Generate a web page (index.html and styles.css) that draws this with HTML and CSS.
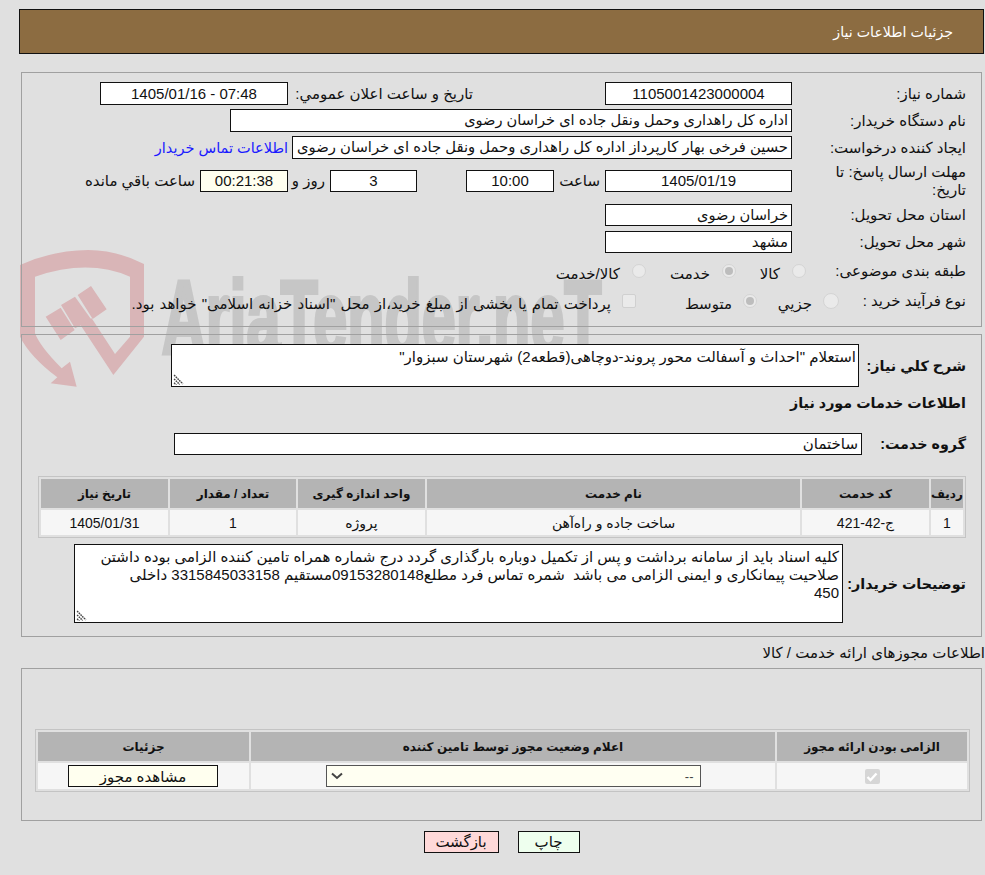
FILE: index.html
```html
<!DOCTYPE html>
<html lang="fa" dir="rtl">
<head>
<meta charset="utf-8">
<title>جزئیات اطلاعات نیاز</title>
<link rel="stylesheet" href="styles.css">
</head>
<body>
<svg class="watermark" width="610" height="160" viewBox="0 0 1830 480" aria-hidden="true">
  <path d="M30 75 Q130 30 235 30 Q320 30 402 72 L402 290 L310 405 L208 250 L245 235 L315 342 L360 290 L360 110 Q235 55 75 110 L75 280 Q90 320 155 385 L180 365 L200 440 L122 430 L142 412 Q60 350 30 290 Z" class="wm-shield"/>
  <path d="M107 230 L152 203 L194 270 L152 300 Z M153 195 L195 170 L245 240 L195 265 Z M203 165 L243 138 L290 208 L248 237 Z" class="wm-shield"/>
  <text x="455" y="338" font-size="310" textLength="1320" lengthAdjust="spacingAndGlyphs" class="wm-text">AriaTender.neT</text>
</svg>

<header class="page-title">جزئیات اطلاعات نیاز</header>

<section class="panel panel-main">
  <div class="row">
    <label class="lbl">شماره نیاز:</label>
    <div class="box w187 center">1105001423000004</div>
    <label class="lbl-mid">تاریخ و ساعت اعلان عمومي:</label>
    <div class="box w188 center" dir="ltr">1405/01/16 - 07:48</div>
  </div>
  <div class="row">
    <label class="lbl">نام دستگاه خریدار:</label>
    <div class="box w562 compact">اداره کل راهداری وحمل ونقل جاده ای خراسان رضوی</div>
  </div>
  <div class="row">
    <label class="lbl">ایجاد کننده درخواست:</label>
    <div class="box w500 wide">حسین فرخی بهار کارپرداز اداره کل راهداری وحمل ونقل جاده ای خراسان رضوی</div>
    <a class="link" href="#">اطلاعات تماس خریدار</a>
  </div>
  <div class="row row-deadline">
    <label class="lbl lbl-wrap">مهلت ارسال پاسخ: تا تاریخ:</label>
    <div class="box w187 center h22">1405/01/19</div>
    <span class="t-saat">ساعت</span>
    <div class="box w88 center h22">10:00</div>
    <div class="box w87 center h22 days">3</div>
    <span class="t-roz">روز و</span>
    <div class="box w88 center h22 remain">00:21:38</div>
    <span class="t-remain">ساعت باقي مانده</span>
  </div>
  <div class="row row-h22">
    <label class="lbl">استان محل تحویل:</label>
    <div class="box w187 h22 compact">خراسان رضوی</div>
  </div>
  <div class="row row-h22">
    <label class="lbl">شهر محل تحویل:</label>
    <div class="box w187 h22">مشهد</div>
  </div>
  <div class="row row-radio">
    <label class="lbl lbl-cat">طبقه بندی موضوعی:</label>
    <span class="radio"></span><span class="ch ch-kala">کالا</span>
    <span class="radio on"></span><span class="ch ch-khed">خدمت</span>
    <span class="radio"></span><span class="ch">کالا/خدمت</span>
  </div>
  <div class="row row-radio2">
    <label class="lbl lbl-type">نوع فرآیند خرید :</label>
    <span class="radio big"></span><span class="ch ch-joz">جزیي</span>
    <span class="radio on"></span><span class="ch ch-mot">متوسط</span>
    <span class="check"></span><span class="ch ch-pay">پرداخت تمام یا بخشی از مبلغ خرید،از محل "اسناد خزانه اسلامی" خواهد بود.</span>
  </div>
</section>

<section class="panel panel-need">
  <div class="row-desc">
    <label class="lbl-b">شرح کلي نیاز:</label>
    <div class="area area-desc">استعلام "احداث و آسفالت محور پروند-دوچاهی(قطعه2) شهرستان سبزوار"<svg class="grip" width="11" height="11" viewBox="0 0 10 10"><path d="M1 1 L9 9 M1 4.5 L6 9.5 M1 8 L3 10" stroke="#444" stroke-width="1.3" fill="none" stroke-dasharray="1.5 .7"/></svg></div>
  </div>
  <h2 class="subhead">اطلاعات خدمات مورد نیاز</h2>
  <div class="row-group">
    <label class="lbl-b lbl-group">گروه خدمت:</label>
    <div class="box w688 h22">ساختمان</div>
  </div>
  <table class="grid grid-items">
    <thead>
      <tr><th class="c1">ردیف</th><th class="c2">کد خدمت</th><th class="c3">نام خدمت</th><th class="c4">واحد اندازه گیری</th><th class="c5">تعداد / مقدار</th><th class="c6">تاریخ نیاز</th></tr>
    </thead>
    <tbody>
      <tr><td>1</td><td>ج-42-421</td><td>ساخت جاده و راه‌آهن</td><td>پروژه</td><td>1</td><td>1405/01/31</td></tr>
    </tbody>
  </table>
  <div class="row-notes">
    <label class="lbl-b lbl-notes">توضیحات خریدار:</label>
    <div class="area area-notes">کلیه اسناد باید از سامانه برداشت و پس از تکمیل دوباره بارگذاری گردد درج شماره همراه تامین کننده الزامی بوده داشتن صلاحیت پیمانکاری و ایمنی الزامی می باشد&nbsp; شمره تماس فرد مطلع09153280148مستقیم 3315845033158 داخلی<br>450<svg class="grip" width="11" height="11" viewBox="0 0 10 10"><path d="M1 1 L9 9 M1 4.5 L6 9.5 M1 8 L3 10" stroke="#444" stroke-width="1.3" fill="none" stroke-dasharray="1.5 .7"/></svg></div>
  </div>
</section>

<div class="permit-title">اطلاعات مجوزهای ارائه خدمت / کالا</div>
<section class="panel panel-permit">
  <table class="grid grid-permit">
    <thead>
      <tr><th class="p1">الزامی بودن ارائه مجوز</th><th class="p2">اعلام وضعیت مجوز توسط تامین کننده</th><th class="p3">جزئیات</th></tr>
    </thead>
    <tbody>
      <tr>
        <td><span class="checked"><svg width="12" height="10" viewBox="0 0 12 10"><path d="M1.5 5 L4.5 8 L10.5 1.5" stroke="#fff" stroke-width="2.4" fill="none"/></svg></span></td>
        <td><div class="select"><span>--</span><svg width="12" height="8" viewBox="0 0 12 8"><path d="M1 1.5 L6 6 L11 1.5" stroke="#444" stroke-width="2" fill="none"/></svg></div></td>
        <td><button class="btn-view" type="button">مشاهده مجوز</button></td>
      </tr>
    </tbody>
  </table>
</section>

<div class="actions">
  <button class="btn btn-print" type="button">چاپ</button>
  <button class="btn btn-back" type="button">بازگشت</button>
</div>
</body>
</html>
```
FILE: styles.css
```css
* { box-sizing: border-box; }
html, body { margin: 0; padding: 0; }
body {
  background: #e0e0e0;
  color: #111;
  font-family: "Liberation Sans", "DejaVu Sans", sans-serif;
  font-size: 15px;
  width: 985px;
  height: 875px;
  position: relative;
  overflow: hidden;
  padding: 9px 0 0 0;
}
.watermark { position: absolute; left: 10px; top: 240px; z-index: 0; pointer-events: none; direction: ltr; }
.wm-shield { fill: #d9b5b7; }
.wm-text { font-family: "Liberation Sans", sans-serif; font-weight: 700; fill: #c6c6c6; stroke: #c6c6c6; stroke-width: 12px; direction: ltr; }
.page-title {
  width: 965px;
  margin: 0 1px 0 19px;
  height: 45px;
  background: #8c6c41;
  border: 1px solid #111;
  color: #fff;
  font-size: 14.2px;
  padding: 12px 30px 0 0;
  line-height: 20px;
}
.panel { position: relative; border: 1px solid #a0a0a0; z-index: 1; }
.panel-main { margin: 18px 3px 0 21px; width: 961px; height: 255px; padding: 9px 0 0; }
.row { display: flex; align-items: center; height: 23px; margin-bottom: 4px; }
.lbl { width: 189px; flex: none; padding-right: 15px; line-height: 18px; }
.lbl-wrap { padding-left: 24px; }
.lbl-cat { width: 175px; white-space: nowrap; }
.lbl-type { width: 142px; white-space: nowrap; }
.box {
  background: #fff;
  border: 1px solid #111;
  height: 23px;
  line-height: 21px;
  padding: 0 3px;
  white-space: nowrap;
  overflow: hidden;
  flex: none;
}
.compact { font-size: 14.6px; }
.wide { font-size: 14.8px; }
.center { text-align: center; }
.h22 { height: 22px; line-height: 20px; }
.w187 { width: 187px; }
.w188 { width: 188px; }
.w562 { width: 562px; }
.w500 { width: 500px; }
.w88 { width: 88px; }
.w87 { width: 87px; }
.w688 { width: 688px; }
.lbl-mid { width: 317px; flex: none; padding-right: 132px; white-space: nowrap; }
.link { color: #1a1aff; text-decoration: none; margin-right: 4px; white-space: nowrap; font-size: 14.5px; }
.row-deadline { height: 38px; margin-top: -1px; }
.t-saat { margin-right: 5px; width: 46px; flex: none; white-space: nowrap; }
.days { margin-right: 49px; }
.t-roz { margin-right: 5px; width: 37px; flex: none; white-space: nowrap; }
.remain { background: #ffffef; }
.t-remain { margin-right: 5px; white-space: nowrap; }
.row-h22 { height: 22px; margin-bottom: 5px; }
.row-radio { height: 26px; margin-bottom: 2px; }
.row-radio2 { height: 30px; margin-bottom: 0; }
.radio {
  width: 14px; height: 14px; border-radius: 50%;
  background: #eaeaea; border: 1px solid #d4d4d4;
  position: relative; flex: none; margin-left: 12px;
}
.radio.big { width: 16px; height: 16px; }
.row-radio2 .radio { margin-left: 11px; }
.radio.on::after { content: ""; position: absolute; inset: 2px; border-radius: 50%; background: #bdbdbd; }
.check {
  width: 14px; height: 14px; border: 1px solid #d0d0d0; border-radius: 2px; background: #eaeaea;
  flex: none; margin-left: 11px;
}
.ch { white-space: nowrap; flex: none; margin-top: 5px; }
.row-radio2 .ch { margin-top: 6px; }
.ch-kala { width: 44px; }
.ch-khed { width: 64px; }
.ch-joz { width: 55px; }
.ch-mot { width: 96px; }
.ch-pay { word-spacing: 1px; }
.panel-need { margin: 7px 3px 0 21px; width: 961px; height: 303px; padding: 9px 0 0; }
.row-desc { display: flex; align-items: center; height: 43px; }
.lbl-b { font-weight: 700; font-size: 14.3px; white-space: nowrap; }
.row-desc .lbl-b { width: 122px; padding-right: 15px; flex: none; }
.area {
  background: #fff; border: 1px solid #111; position: relative; padding: 3px 2px 0 0; line-height: 18px;
  flex: none;
}
.area-desc { width: 688px; height: 43px; }
.grip { position: absolute; left: 1px; bottom: 1px; }
.subhead { font-size: 14.3px; font-weight: 700; margin: 6px 15px 0 0; line-height: 20px; }
.row-group { display: flex; align-items: center; margin-top: 20px; }
.lbl-group { width: 119px; padding-right: 15px; flex: none; }
.grid { border-collapse: separate; border-spacing: 2px; background: #e0e0e0; border: 1px solid #c4c4c4; text-align: center; table-layout: fixed; }
.grid th { background: #b4b4b4; font-size: 12px; font-weight: 700; height: 29px; padding: 0; white-space: nowrap; }
.grid td { background: #f6f6f6; height: 25px; padding: 0; font-size: 14px; white-space: nowrap; }
.grid-items { width: 928px; margin: 21px 15px 0 0; }
.c1 { width: 32px; } .c2 { width: 127px; } .c3 { width: 373px; }
.c4 { width: 127px; } .c5 { width: 126px; } .c6 { width: 127px; }
.row-notes { display: flex; align-items: center; margin-top: 6px; }
.lbl-notes { width: 138px; padding-right: 15px; flex: none; }
.area-notes { width: 769px; height: 79px; padding: 3px 3px 0 20px; }
.permit-title { margin: 6px 0 0 0; height: 25px; line-height: 20px; white-space: nowrap; position: relative; z-index: 1; }
.panel-permit { margin: 0 3px 0 21px; width: 961px; height: 153px; padding: 60px 0 0; }
.grid-permit { width: 935px; margin: 0 11px 0 0; }
.p1 { width: 190px; } .p2 { width: 524px; } .p3 { width: 211px; }
.grid-permit td { height: 26px; }
.checked { display: inline-flex; width: 15px; height: 15px; background: #d6d6d6; border-radius: 2px; align-items: center; justify-content: center; vertical-align: middle; }
.select {
  width: 375px; height: 22px; margin: 0 auto; background: #fffff2; border: 1px solid #555;
  display: flex; justify-content: space-between; align-items: center; padding: 0 6px 0 4px; font-size: 13px; color: #444;
}
.btn-view { width: 150px; height: 22px; background: #ffffef; border: 1px solid #111; font: inherit; font-size: 15px; padding: 1px 0 0; line-height: 20px; color: #111; display: block; margin: 0 auto 0 30px; }
.actions { display: flex; justify-content: center; margin-top: 10px; padding-left: 18px; }
.btn { height: 22px; font: inherit; border: 1px solid #111; padding: 0; line-height: 18px; color: #111; }
.btn-print { width: 62px; background: #eeffee; margin-left: 19px; }
.btn-back { width: 75px; background: #ffd9d9; }
```
